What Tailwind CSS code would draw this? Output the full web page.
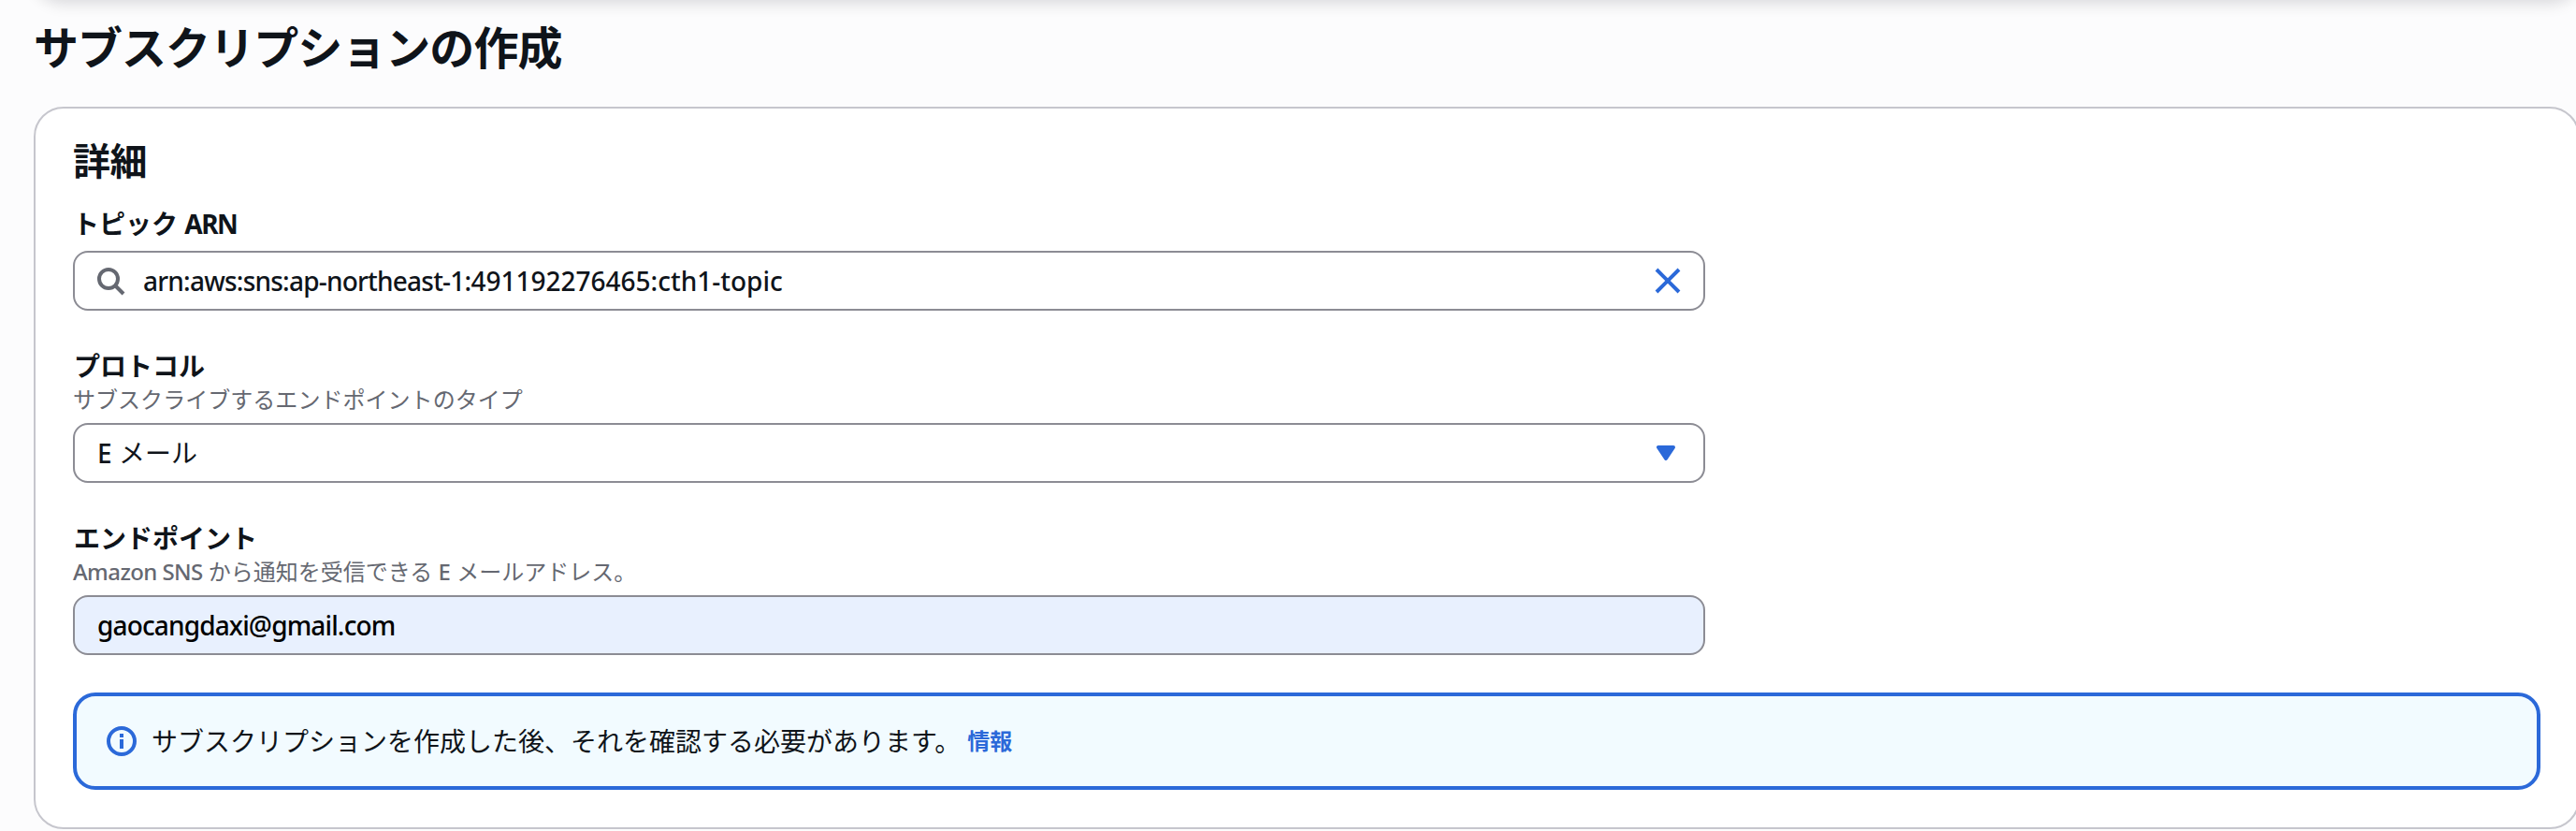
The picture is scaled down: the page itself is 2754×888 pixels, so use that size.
<!DOCTYPE html>
<html lang="ja">
<head>
<meta charset="utf-8">
<title>サブスクリプションの作成</title>
<script src="https://cdn.jsdelivr.net/npm/@tailwindcss/browser@4"></script>
</head>
<body class="relative h-[888px] w-[2754px] overflow-hidden bg-[#fcfcfd] font-['Noto_Sans','Noto_Sans_CJK_JP',sans-serif] text-[#0f141a]">
<div class="absolute -top-[100px] left-[36px] h-[100px] w-[2722px] rounded-[32px] shadow-[0_2px_16px_2px_rgba(0,7,22,0.14)]"></div>
<h1 class="h-[114px] pt-[21px] pl-[36px] text-[48px] leading-[60px] font-bold tracking-[-0.96px]">サブスクリプションの作成</h1>
<main class="ml-[36px] h-[772px] w-[2722px] rounded-[32px] border-2 border-[#c6c6cd] bg-white px-[40px] pt-[32px]">
  <h2 class="h-[71px] text-[40px] leading-[48px] font-bold tracking-[-0.6px]">詳細</h2>
  <div class="h-[49px] text-[28px] leading-[40px] font-bold">トピック <span class="tracking-[-1.5px]">ARN</span></div>
  <div class="flex h-[64px] w-[1745px] items-center rounded-[16px] border-2 border-[#8c8c94] pr-[22px] pl-[22px]">
    <svg class="size-[32px] shrink-0" viewBox="0 0 16 16" fill="none" stroke="#656871" stroke-width="2"><circle cx="7" cy="7" r="5"/><path d="m15 15-4.5-4.5"/></svg>
    <span class="ml-[19px] text-[28px] leading-[40px] font-medium"><span class="tracking-[-0.78px]">arn:aws:sns:ap-northeast-1:</span>491192276465:cth1-topic</span>
    <svg class="ml-auto size-[32px] shrink-0" viewBox="0 0 16 16" fill="none" stroke="#2b69d9" stroke-width="2"><path d="m2 2 12 12M14 2 2 14"/></svg>
  </div>
  <div class="mt-[39px] h-[40px] pl-px text-[28px] leading-[40px] font-bold">プロトコル</div>
  <div class="h-[41px] text-[24px] leading-[32px] tracking-[0.04px] text-[#656871]">サブスクライブするエンドポイントのタイプ</div>
  <div class="flex h-[64px] w-[1745px] items-center justify-between rounded-[16px] border-2 border-[#8c8c94] pr-[24px] pl-[24px]">
    <span class="text-[28px] leading-[40px]"><span class="font-medium">E</span> メール</span>
    <svg class="size-[32px]" viewBox="0 0 16 16" fill="#2b69d9" stroke="#2b69d9" stroke-width="2" stroke-linejoin="round"><path d="M4 5h8l-4 6-4-6z"/></svg>
  </div>
  <div class="mt-[39px] h-[40px] pl-px text-[28px] leading-[40px] font-bold">エンドポイント</div>
  <div class="h-[41px] text-[24px] leading-[32px] text-[#656871]"><span class="font-medium tracking-[-0.6px]">Amazon SNS</span> から通知を受信できる <span class="font-medium">E</span> メールアドレス。</div>
  <div class="flex h-[64px] w-[1745px] items-center rounded-[16px] border-2 border-[#8c8c94] bg-[#e8f0fe] pl-[24px] text-black">
    <span class="text-[28px] leading-[40px] font-medium tracking-[-0.86px]">gaocangdaxi@gmail.com</span>
  </div>
  <div class="mt-[40px] flex h-[104px] items-center rounded-[24px] border-4 border-[#2b69d9] bg-[#f2fbff] pl-[32px]">
    <svg class="size-[32px]" viewBox="0 0 16 16" fill="none" stroke="#2b69d9" stroke-width="2"><circle cx="8" cy="8" r="7"/><path d="M8 12V7M8 6V4"/></svg>
    <p class="ml-[16px] text-[28px] leading-[40px]">サブスクリプションを作成した後、それを確認する必要があります。</p>
    <a class="ml-[7px] text-[24px] leading-[40px] font-bold text-[#2b69d9]">情報</a>
  </div>
</main>
</body>
</html>
